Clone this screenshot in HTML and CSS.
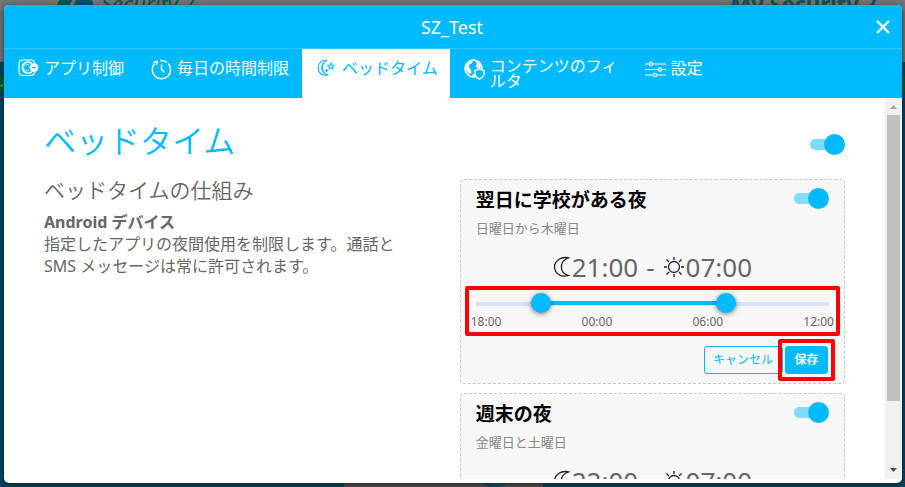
FILE: index.html
```html
<!DOCTYPE html>
<html lang="ja">
<head>
    <meta charset="UTF-8">
    <meta name="viewport" content="width=device-width, initial-scale=1.0">
    <title>SZ_Test</title>
    <link rel="stylesheet" href="styles.css">
</head>
<body>
    <!-- Dimmed page behind the dialog -->
    <div class="page" aria-hidden="true">
        <div class="page-top">
            <div class="brand">
                <svg width="38" height="20" viewBox="0 0 38 20"><path d="M0 20C0 8 9 0 20 0L10 20ZM14 20L22 4 30 0C36 5 38 12 38 20Z" fill="#005473"/></svg>
                <span>Security 7</span>
            </div>
            <div class="page-name">My Security 7</div>
        </div>
        <div class="page-green">✓</div>
        <div class="page-bottom"><span class="page-circle"></span></div>
    </div>

    <div class="modal" role="dialog" aria-labelledby="dialogTitle">
        <div class="modal-header">
            <h1 id="dialogTitle">SZ_Test</h1>
            <button type="button" class="close-button" aria-label="閉じる">
                <svg width="14" height="14" viewBox="0 0 14 14"><path d="M1 1L13 13M13 1L1 13" stroke="#fff" stroke-width="2.4"/></svg>
            </button>
        </div>

        <nav class="tabs">
            <a href="#apps" class="tab">
                <svg width="21" height="18" viewBox="0 0 21 18" fill="none" stroke="#fff" stroke-width="1.2">
                    <path d="M17 4.500C16.500 2 15 1 12.500 1H5C2 1 1 2.500 1 5V12C1 15 2.500 16.500 5 16.500H12C15 16.500 16.500 15 17 13"/>
                    <path d="M14 4.800A5.600 5.600 0 1 0 14 12.400" stroke-width="1.500"/>
                    <path d="M11 6.200A3.300 3.300 0 1 0 11 11" stroke-width="0.800"/>
                    <circle cx="16" cy="8.600" r="4.400" fill="#fff" stroke="none"/>
                    <path d="M14 8.600H18" stroke="#00baff"/>
                </svg>
                <span>アプリ制御</span>
            </a>
            <a href="#daily" class="tab">
                <svg width="21" height="21" viewBox="0 0 21 21" fill="none" stroke="#fff" stroke-width="1.500">
                    <path d="M9 1.500A9.200 9.200 0 0 1 16 3.500M17.300 4.500A9.200 9.200 0 1 1 3.500 4.500"/>
                    <path d="M2.500 3.500L6 2.500 5.500 6M10.500 5.500V10.500L13.500 13.500"/>
                </svg>
                <span>毎日の時間制限</span>
            </a>
            <a href="#bedtime" class="tab active">
                <svg width="21" height="18" viewBox="0 0 21 18" fill="none" stroke="#00baff" stroke-width="1.100">
                    <path d="M10.500 1.600C6 0 2.200 4 2.200 9S6.500 18 12.500 15.500C5.500 15.500 4.500 5.500 10.500 1.600Z"/>
                    <path d="M8 3C4 7 5 13 9 15.500" stroke-width="0.700"/>
                    <path d="M15 4L15.900 6 18 6.300 16.400 7.700 16.900 9.900 15 8.800 13.100 9.900 13.600 7.700 12 6.300 14.100 6Z"/>
                    <path d="M10.500 9.300L11.200 10.800 12.700 11.500 11.200 12.200 10.500 13.700 9.800 12.200 8.300 11.500 9.800 10.800Z" fill="#00baff" stroke="none"/>
                </svg>
                <span>ベッドタイム</span>
            </a>
            <a href="#content" class="tab tab-wrap">
                <svg width="21" height="21" viewBox="0 0 21 21">
                    <circle cx="9.500" cy="9.500" r="8.500" fill="none" stroke="#fff" stroke-width="1.600"/>
                    <path d="M2 5L6 1.500 9 2.500 7.500 4.500 5.500 5.500 5 8 6.500 10 7.500 13 6.500 15.500 3.500 13.500 1.500 9ZM11 2L15 4 17.500 8 14.500 10 11.500 7.500 13 5ZM8 16L10.500 14.500 11.500 17 9 18Z" fill="#fff"/>
                    <path d="M11 11.500L15.500 10 20 11.500V14C20 17 18 19 15.500 20 13 19 11 17 11 14Z" fill="#00baff" stroke="#fff" stroke-width="1.400"/>
                </svg>
                <span>コンテンツのフィルタ</span>
            </a>
            <a href="#settings" class="tab">
                <svg width="21" height="18" viewBox="0 0 21 18" fill="none" stroke="#fff" stroke-width="1.200">
                    <path d="M0 5H4M8 5H21M0 10.500H13M17 10.500H21M0 16H8M12 16H21"/>
                    <circle cx="6" cy="5" r="1.600"/><circle cx="15" cy="10.500" r="1.600"/><circle cx="10" cy="16" r="1.600"/>
                </svg>
                <span>設定</span>
            </a>
        </nav>

        <div class="modal-body">
            <div class="content">
                <div class="title-row">
                    <h2>ベッドタイム</h2>
                    <input type="checkbox" class="switch" aria-label="ベッドタイム" checked>
                </div>
                <div class="columns">
                    <div class="intro">
                        <h3>ベッドタイムの仕組み</h3>
                        <p><strong>Android デバイス</strong><br>指定したアプリの夜間使用を制限します。通話と SMS メッセージは常に許可されます。</p>
                    </div>
                    <div class="cards">
                        <section class="card">
                            <div class="card-head">
                                <label for="schoolNights">翌日に学校がある夜</label>
                                <input type="checkbox" class="switch" id="schoolNights" checked>
                            </div>
                            <p class="days">日曜日から木曜日</p>
                            <div class="times">
                                <svg width="18" height="22" viewBox="0 0 18 22"><path d="M15.500 2C8 0 1.500 5 1.500 11S8 22 15.500 19.500C6 17 6 5 15.500 2Z" fill="none" stroke="#222" stroke-width="1.300"/></svg>
                                <span>21:00</span><span class="dash">-</span>
                                <svg width="22" height="22" viewBox="0 0 22 22" fill="none" stroke="#222" stroke-width="1.300"><circle cx="11" cy="11" r="5.500"/><path d="M11 1V4M11 18V21M1 11H4M18 11H21M3.500 3.500L6 6M16 16L18.500 18.500M18.500 3.500L16 6M6 16L3.500 18.500"/></svg>
                                <span>07:00</span>
                            </div>
                            <div class="slider-area">
                                <div class="slider">
                                    <div class="slider-fill" style="left: 17%; width: 54%"></div>
                                    <input type="range" min="0" max="18" value="3" aria-label="開始時刻">
                                    <input type="range" min="0" max="18" value="13" aria-label="終了時刻">
                                </div>
                                <div class="scale"><span>18:00</span><span>00:00</span><span>06:00</span><span>12:00</span></div>
                            </div>
                            <div class="actions">
                                <button type="button" class="cancel-button">キャンセル</button>
                                <div class="save-wrap"><button type="button" class="save-button">保存</button></div>
                            </div>
                        </section>
                        <section class="card">
                            <div class="card-head">
                                <label for="weekendNights">週末の夜</label>
                                <input type="checkbox" class="switch" id="weekendNights" checked>
                            </div>
                            <p class="days">金曜日と土曜日</p>
                            <div class="times">
                                <svg width="18" height="22" viewBox="0 0 18 22"><path d="M15.500 2C8 0 1.500 5 1.500 11S8 22 15.500 19.500C6 17 6 5 15.500 2Z" fill="none" stroke="#222" stroke-width="1.300"/></svg>
                                <span>22:00</span><span class="dash">-</span>
                                <svg width="22" height="22" viewBox="0 0 22 22" fill="none" stroke="#222" stroke-width="1.300"><circle cx="11" cy="11" r="5.500"/><path d="M11 1V4M11 18V21M1 11H4M18 11H21M3.500 3.500L6 6M16 16L18.500 18.500M18.500 3.500L16 6M6 16L3.500 18.500"/></svg>
                                <span>07:00</span>
                            </div>
                        </section>
                    </div>
                </div>
            </div>
            <div class="scrollbar" aria-hidden="true">
                <svg width="17" height="17" viewBox="0 0 17 17"><path d="M5 11L8.500 7 12 11Z" fill="#a3a3a3"/></svg>
                <div class="scroll-thumb"></div>
                <svg width="17" height="17" viewBox="0 0 17 17"><path d="M5 6L8.500 10 12 6Z" fill="#505050"/></svg>
            </div>
        </div>
    </div>
</body>
</html>
```
FILE: styles.css
```css
* {
    box-sizing: border-box;
}

body {
    font-family: "Noto Sans", "Noto Sans CJK JP", sans-serif;
    margin: 0;
    height: 100vh;
    display: flex;
    overflow: hidden;
    background-color: #004a66;
    color: #666;
    font-size: 16px;
}

h1, h2, h3, p {
    margin: 0;
    font-weight: normal;
}

button {
    font-family: inherit;
    cursor: pointer;
}

svg {
    flex: none;
    display: block;
}

/* Dimmed page */
.page {
    position: absolute;
    inset: 0;
    display: flex;
    flex-direction: column;
    overflow: hidden;
}

.page-top {
    height: 62px;
    background-color: #777;
    display: flex;
    justify-content: space-between;
    padding: 0 28px 0 56px;
    color: #005473;
    font-size: 22px;
    line-height: 6px;
}

.brand {
    display: flex;
    gap: 7px;
    font-style: italic;
}

.brand svg {
    margin-top: -8px;
}

.page-name {
    font-weight: bold;
}

.page-green {
    margin-top: 14px;
    height: 16px;
    background-color: #0b5a2a;
    color: #6c8;
    font-size: 8px;
    line-height: 16px;
}

.page-bottom {
    margin: auto auto 0 38%;
    width: 22%;
    height: 8px;
    padding-left: 14%;
    background-color: #555;
    display: flex;
    align-items: flex-end;
}

.page-circle {
    width: 48px;
    height: 48px;
    border: 2px solid #005a80;
    border-radius: 50%;
    flex: none;
}

/* Dialog */
.modal {
    position: relative;
    flex: 1;
    min-width: 0;
    margin: 5px 3px 4px 4px;
    display: flex;
    flex-direction: column;
    background-color: #fff;
    border-radius: 5px;
    overflow: hidden;
    box-shadow: 0 2px 8px rgba(0, 0, 0, 0.6);
    padding-bottom: 4px;
}

.modal-header {
    display: flex;
    flex: none;
    height: 44px;
    align-items: center;
    background-color: #00baff;
    border-bottom: 1px solid #33c8ff;
    padding: 0 12px 0 24px;
}

.modal-header h1 {
    flex: 1;
    text-align: center;
    font-size: 18px;
    line-height: 24px;
    color: #fff;
}

.close-button {
    background: none;
    border: none;
    padding: 0;
}

.tabs {
    display: flex;
    flex: none;
    height: 49px;
    background-color: #00baff;
}

.tab {
    display: flex;
    align-items: flex-start;
    gap: 5px;
    padding: 10px 13px 0 14px;
    color: #fff;
    text-decoration: none;
    line-height: 18px;
}

.tab.active {
    background-color: #fff;
    color: #00baff;
    padding-right: 12px;
}

.tab-wrap span {
    width: 128px;
    line-height: 15px;
}

.modal-body {
    display: flex;
    flex: 1;
    min-height: 0;
    overflow: hidden;
}

.content {
    flex: 1;
    min-width: 0;
    padding: 22px 40px 0;
}

.title-row {
    display: flex;
    justify-content: space-between;
    align-items: center;
    height: 48px;
}

.title-row h2 {
    font-size: 32px;
    line-height: 40px;
    font-weight: 350;
    color: #00baff;
    margin-bottom: 6px;
}

.switch {
    appearance: none;
    flex: none;
    width: 35px;
    height: 21px;
    margin: 0;
    display: flex;
    align-items: center;
}

.switch::before {
    content: "";
    width: 24px;
    height: 11px;
    border-radius: 5px;
    background-color: #80dcff;
}

.switch::after {
    content: "";
    width: 21px;
    height: 21px;
    margin-left: -10px;
    border-radius: 50%;
    background-color: #00baff;
}

.columns {
    display: grid;
    grid-template-columns: 1fr 48.1%;
    gap: 31px;
    padding-top: 11px;
}

.intro h3 {
    font-size: 21px;
    line-height: 22px;
    font-weight: 350;
    margin-bottom: 10px;
}

.intro p {
    line-height: 22px;
}

.cards {
    display: flex;
    flex-direction: column;
    gap: 9px;
}

.card {
    background-color: #f7f7f7;
    border: 1px dashed #c8c8c8;
    border-radius: 4px;
    padding: 8px 15px 9px;
}

.card-head {
    display: flex;
    justify-content: space-between;
    height: 24px;
}

.card-head label {
    color: #000;
    font-size: 19px;
    font-weight: bold;
    line-height: 24px;
}

.days {
    margin-top: 7px;
    font-size: 13px;
    line-height: 18px;
    color: #888;
}

.times {
    display: flex;
    align-items: center;
    justify-content: center;
    margin-top: 12px;
    font-size: 26px;
    line-height: 36px;
}

.times svg {
    margin-right: 1px;
}

.dash {
    padding: 0 8px;
}

.slider-area {
    position: relative;
    margin-top: 8px;
}

/* Red marks round the slider and the save button */
.slider-area::after,
.save-wrap::after {
    content: "";
    position: absolute;
    inset: -7px -11px -6px;
    border: 4px solid #f00;
    border-radius: 2px;
    pointer-events: none;
}

.slider {
    position: relative;
    height: 20px;
    background: linear-gradient(#d9e2f5, #d9e2f5) 0 9px / 100% 4px no-repeat;
}

.slider-fill {
    position: absolute;
    top: 8px;
    height: 4px;
    background-color: #00baff;
}

.slider input {
    appearance: none;
    position: absolute;
    inset: 0;
    width: 100%;
    height: 20px;
    margin: 0;
    background: none;
    pointer-events: none;
}

.slider input::-webkit-slider-thumb {
    appearance: none;
    width: 20px;
    height: 20px;
    border-radius: 50%;
    background-color: #00baff;
    box-shadow: 0 1px 5px rgba(0, 0, 0, 0.5);
    pointer-events: auto;
}

.scale {
    display: flex;
    justify-content: space-between;
    margin: 1px -5px 0;
    font-size: 12px;
    line-height: 16px;
}

.actions {
    display: flex;
    justify-content: flex-end;
    gap: 2px;
    margin-top: 16px;
    padding-right: 1px;
}

.actions button {
    height: 28px;
    padding: 0 8px;
    border: 1px solid #00baff;
    border-radius: 3px;
    font-size: 12px;
    line-height: 22px;
}

.actions .cancel-button {
    background-color: transparent;
    color: #00baff;
    padding-right: 9px;
}

.save-wrap {
    position: relative;
}

.save-wrap::after {
    inset: -7px;
}

.actions .save-button {
    background-color: #00baff;
    color: #fff;
    font-weight: bold;
    min-width: 43px;
}

/* Scrollbar */
.scrollbar {
    display: flex;
    flex-direction: column;
    flex: none;
    width: 17px;
    background-color: #f1f1f1;
}

.scroll-thumb {
    flex: 0 1 75%;
    margin: 0 2px auto;
    background-color: #c1c1c1;
}
```
